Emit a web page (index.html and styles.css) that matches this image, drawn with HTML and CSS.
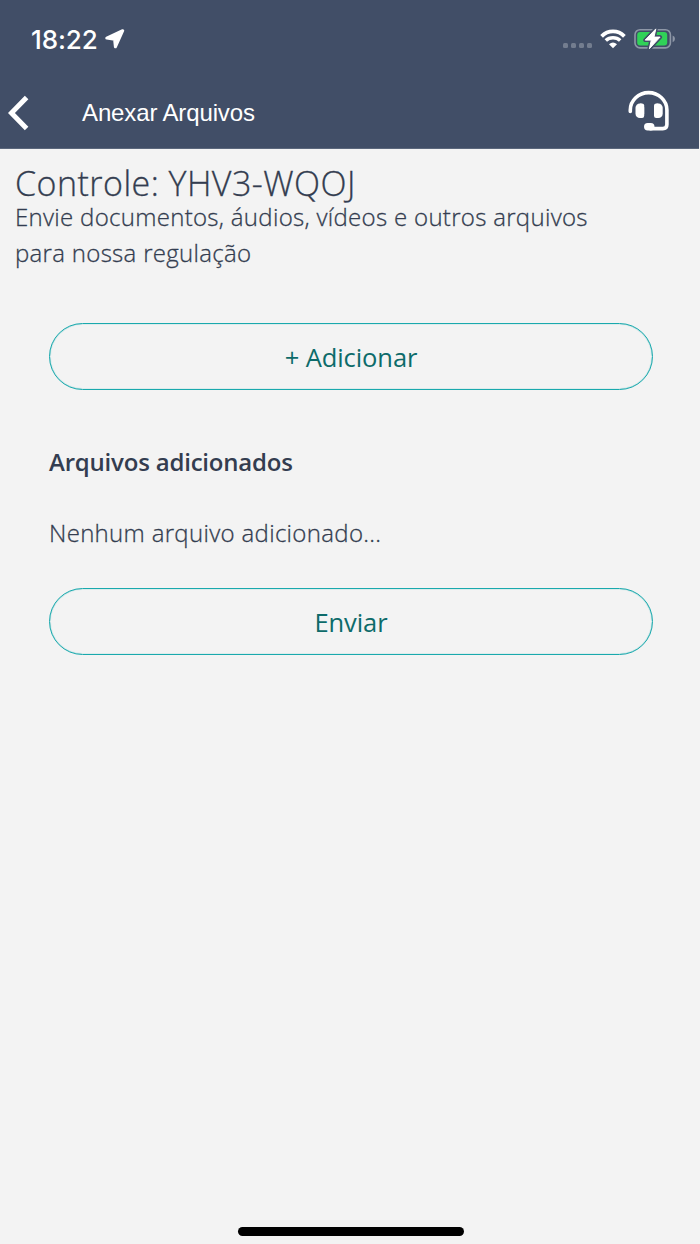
FILE: index.html
```html
<!DOCTYPE html>
<html lang="pt-BR">
<head>
    <meta charset="UTF-8">
    <meta name="viewport" content="width=device-width, initial-scale=1.0">
    <title>Anexar Arquivos</title>
    <link rel="stylesheet" href="styles.css">
</head>
<body>
    <header class="header">
        <div class="status-bar">
            <div class="status-left">
                <span class="time">18:22</span>
                <svg class="location-icon" width="20" height="20" viewBox="0 0 20 20">
                    <path d="M17.7 1.7 L10.4 17.8 L9.6 10.3 L1.8 9.1 Z" fill="#fff" stroke="#fff" stroke-width="3" stroke-linejoin="round"/>
                </svg>
            </div>
            <div class="status-right">
                <div class="signal"><i></i><i></i><i></i><i></i></div>
                <svg class="wifi-icon" width="26" height="20" viewBox="0 0 26 20">
                    <path d="M1.6 7.3 C8 .8 18 .8 24.4 7.3" fill="none" stroke="#fff" stroke-width="3.8"/>
                    <path d="M5.8 11.6 C9.8 7.8 16.2 7.8 20.2 11.6" fill="none" stroke="#fff" stroke-width="3.5"/>
                    <path d="M13 19.3 L9 15.2 Q13 12 17 15.2 Z" fill="#fff"/>
                </svg>
                <svg class="battery-icon" width="42" height="22" viewBox="0 0 42 22">
                    <rect x="1" y="1.7" width="35.4" height="18.2" rx="5" fill="none" stroke="#8e97a7" stroke-width="1.6"/>
                    <path d="M38.6 7.4 Q41 8.4 41 10.8 T38.6 14.2 Z" fill="#8e97a7"/>
                    <rect x="3.2" y="4" width="30" height="13.6" rx="3" fill="#30d158"/>
                    <path d="M21.8 .9 L11.2 12.1 H17.3 L15.4 20.7 L26.1 9.1 H20 Z" fill="none" stroke="#414e67" stroke-width="4" stroke-linejoin="round"/>
                    <path d="M21.8 .9 L11.2 12.1 H17.3 L15.4 20.7 L26.1 9.1 H20 Z" fill="#fff" stroke="#fff" stroke-width="1" stroke-linejoin="round"/>
                </svg>
            </div>
        </div>
        <div class="nav-bar">
            <svg class="back-icon" width="22" height="36" viewBox="0 0 22 36">
                <path d="M18.6 2.5 L3.4 18 L18.6 33.5" fill="none" stroke="#fff" stroke-width="5"/>
            </svg>
            <h1 class="nav-title">Anexar Arquivos</h1>
            <svg class="support-icon" width="42" height="42" viewBox="0 0 42 42">
                <path d="M2.3 21.5 V20 A18.3 17.4 0 0 1 38.9 20 V34.5 Q38.9 38.6 34.8 38.6 H22" fill="none" stroke="#fff" stroke-width="3.6" stroke-linecap="round"/>
                <rect x="7.5" y="13.4" width="8.7" height="14.6" rx="4.3" fill="#fff"/>
                <path d="M12 13.4 H14 Q16.2 13.4 16.2 15.6 V25.8 Q16.2 28 14 28 H12 Z" fill="#fff"/>
                <rect x="26" y="13.4" width="8.7" height="14.6" rx="4.3" fill="#fff"/>
                <path d="M30.2 13.4 H28.2 Q26 13.4 26 15.6 V25.8 Q26 28 28.2 28 H30.2 Z" fill="#fff"/>
                <rect x="16" y="33" width="10.5" height="7.4" rx="3.7" fill="#fff"/>
            </svg>
        </div>
    </header>

    <main class="content">
        <h2 class="title">Controle: YHV3-WQOJ</h2>
        <p class="description">Envie documentos, áudios, vídeos e outros arquivos para nossa regulação</p>

        <section class="files">
            <button class="btn">+ Adicionar</button>
            <h3 class="files-title">Arquivos adicionados</h3>
            <p class="files-empty">Nenhum arquivo adicionado...</p>
            <button class="btn">Enviar</button>
        </section>
    </main>

    <div class="home-indicator"></div>
</body>
</html>
```
FILE: styles.css
```css
* { margin: 0; padding: 0; box-sizing: border-box; }
:root {
    --header: #414e67; --bg: #f3f3f3; --text: #333d50;
    --teal: #19a9ad; --teal-dark: #0d6b6a;
}
body {
    font-family: "Open Sans", sans-serif;
    background: var(--bg); color: var(--text);
    height: 1244px; display: flex; flex-direction: column;
    overflow: hidden;
}
svg { display: block; flex: none; }

.header {
    width: 699px; height: 149px; background: var(--header);
    border-bottom: 1px solid #5b677c; color: #fff;
}
.status-bar {
    display: flex; justify-content: space-between; align-items: center;
    height: 78px; padding: 0 24px 0 31px;
}
.status-left, .status-right { display: flex; align-items: center; }
.time {
    font-family: Inter, sans-serif; font-size: 26px; font-weight: 550;
    line-height: 32px; letter-spacing: -0.1px; padding-top: 1px;
}
.location-icon { margin-left: 7px; }
.signal { display: flex; gap: 3px; margin: 12px 8px 0 0; }
.signal i { width: 5px; height: 5px; border-radius: 1.5px; background: #737d8f; }
.wifi-icon { margin-right: 8px; }
.battery-icon { margin-right: -1px; }

.nav-bar { display: flex; align-items: center; height: 70px; padding: 0 29px 1px 8px; }
.nav-title {
    flex: 1; margin-left: 52px; padding-top: 1px;
    font-family: "Liberation Sans", Arial, sans-serif;
    font-size: 24px; font-weight: 400; line-height: 30px; letter-spacing: -0.13px;
}
.support-icon { margin-top: -3px; }

.content { flex: 1; padding: 13px 15px 0; }
.title, .description, .files-empty { font-weight: 300; -webkit-text-stroke: 0.3px var(--text); }
.title { font-size: 34px; line-height: 42px; letter-spacing: 0.46px; }
.description {
    max-width: 620px; margin-top: -5px;
    font-size: 24px; line-height: 36px; letter-spacing: 0.3px;
}

.files { padding: 52px 32px 0 34px; }
.btn {
    display: block; width: 100%; height: 67px;
    border: 1px solid var(--teal); border-radius: 34px;
    box-shadow: inset 0 0 1px var(--teal);
    background: transparent; color: var(--teal-dark);
    font-family: inherit; font-size: 25.5px; letter-spacing: -0.08px; cursor: pointer;
}
.files-title {
    margin-top: 54px; font-size: 24px; font-weight: 600;
    line-height: 36px; letter-spacing: -0.2px;
}
.files-empty { margin: 35px 0 37px; font-size: 24px; line-height: 36px; letter-spacing: 0.32px; }

.home-indicator {
    width: 226px; height: 9px; margin: 0 0 8px 238px;
    border-radius: 5px; background: #000;
}
```
